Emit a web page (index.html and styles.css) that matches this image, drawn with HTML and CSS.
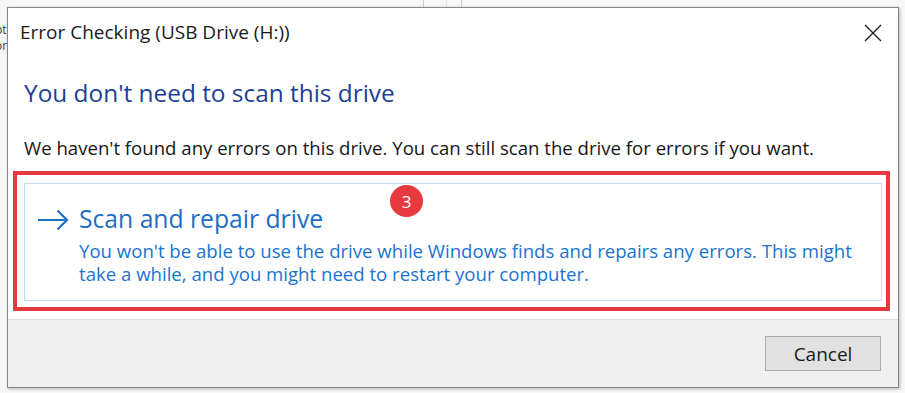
FILE: index.html
```html
<!DOCTYPE html>
<html lang="en">
<head>
<meta charset="utf-8">
<title>Error Checking (USB Drive (H:))</title>
<link rel="stylesheet" href="styles.css">
</head>
<body>
<div class="backdrop">
  <span class="bd-line l1"></span>
  <span class="bd-line l2"></span>
  <span class="bd-line l3"></span>
  <span class="bd-text t1">pt</span>
  <span class="bd-text t2">or</span>
</div>
<div class="dialog">
  <div class="titlebar">
    <span class="title">Error Checking (USB Drive (H:))</span>
    <svg class="close" width="18" height="18" viewBox="0 0 18 18"><path d="M1 1 L17 17 M17 1 L1 17" stroke="#1b1b1b" stroke-width="1.3" fill="none"/></svg>
  </div>
  <div class="content">
    <h1 class="heading">You don't need to scan this drive</h1>
    <p class="message">We haven't found any errors on this drive. You can still scan the drive for errors if you want.</p>
    <div class="highlight">
      <div class="cmdlink">
        <svg class="arrow" width="32" height="22" viewBox="0 0 32 22"><path d="M1 11 H30 M20.5 1.5 L30 11 L20.5 20.5" stroke="#1f6fc5" stroke-width="2.2" fill="none"/></svg>
        <div class="cmd-text">
          <div class="cmd-title">Scan and repair drive</div>
          <div class="cmd-desc">You won't be able to use the drive while Windows finds and repairs any errors. This might take a while, and you might need to restart your computer.</div>
        </div>
      </div>
      <span class="badge">3</span>
    </div>
  </div>
  <div class="footer">
    <button class="btn">Cancel</button>
  </div>
</div>
</body>
</html>
```

FILE: styles.css
```css
html, body {
  margin: 0;
  padding: 0;
}
body {
  width: 905px;
  height: 393px;
  background: #f6f6f6;
  font-family: "Open Sans", "Noto Sans", sans-serif;
  position: relative;
  overflow: hidden;
}
.backdrop {
  position: absolute;
  inset: 0;
}
.bd-line {
  position: absolute;
  top: 0;
  width: 1px;
  height: 8px;
  background: #cfcfcf;
}
.l1 { left: 423px; }
.l2 { left: 446px; background: #e2e2e2; }
.l3 { left: 461px; }
.bd-text {
  position: absolute;
  left: -5px;
  font-size: 12px;
  color: #333a55;
  line-height: 12px;
  height: 12px;
}
.t1 { top: 24px; }
.t2 { top: 40px; }
.dialog {
  position: absolute;
  left: 7px;
  top: 7px;
  width: 890px;
  height: 379px;
  border: 1px solid #868686;
  background: #ffffff;
  box-shadow: 1px 1px 3px rgba(0,0,0,0.25);
  display: flex;
  flex-direction: column;
}
.titlebar {
  height: 52px;
  display: flex;
  align-items: center;
  justify-content: space-between;
  padding: 0 16px 0 12px;
}
.title {
  font-size: 19px;
  color: #1a1a1a;
  margin-top: -4px;
}
.close {
  margin-top: -3px;
}
.content {
  flex: 1;
  display: flex;
  flex-direction: column;
}
.heading {
  margin: 17px 0 0 16px;
  font-size: 24.4px;
  font-weight: normal;
  line-height: 32px;
  color: #1d3f96;
}
.message {
  margin: 28px 0 0 16px;
  font-size: 18.6px;
  line-height: 22px;
  color: #161616;
}
.highlight {
  position: relative;
  margin: 12px 8px 0 5px;
  border: 4px solid #e8393e;
  padding: 8px 4px 6px 7px;
}
.cmdlink {
  border: 1px solid #c4dbf2;
  height: 116px;
  display: flex;
  align-items: flex-start;
  padding: 0 10px 0 12px;
}
.arrow {
  margin-top: 25px;
  flex: none;
}
.cmd-text {
  margin-left: 10px;
  padding-top: 19px;
}
.cmd-title {
  font-size: 24.7px;
  line-height: 32px;
  color: #1f6dc4;
}
.cmd-desc {
  margin-top: 4px;
  font-size: 18.6px;
  line-height: 23px;
  color: #1a73d1;
  width: 785px;
}
.badge {
  position: absolute;
  left: 373px;
  top: 10px;
  width: 33px;
  height: 32px;
  border-radius: 50%;
  background: #e8393e;
  color: #ffffff;
  font-size: 17px;
  display: flex;
  align-items: center;
  justify-content: center;
}
.footer {
  height: 68px;
  border-top: 1px solid #dfdfdf;
  background: #f0f0f0;
  display: flex;
  justify-content: flex-end;
  align-items: flex-start;
  padding: 16px 17px 0 0;
  box-sizing: border-box;
}
.btn {
  width: 116px;
  height: 35px;
  border: 1px solid #adadad;
  background: #e1e1e1;
  font-family: "Open Sans", "Noto Sans", sans-serif;
  font-size: 19px;
  color: #1a1a1a;
  padding: 0;
}
```
